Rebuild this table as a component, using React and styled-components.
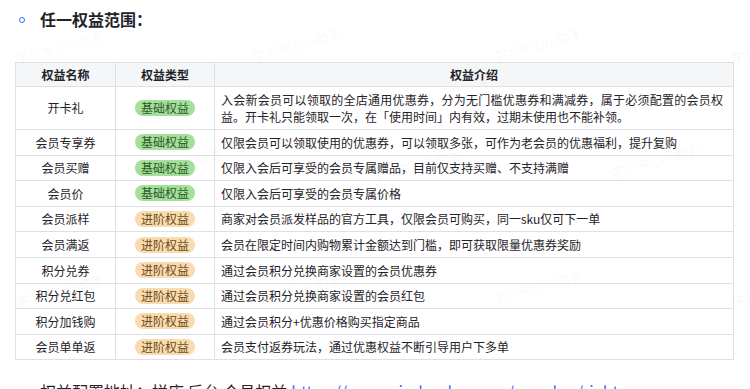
import React from "react";
import styled, { createGlobalStyle } from "styled-components";

const Global = createGlobalStyle`
  html, body { margin: 0; padding: 0; background: #fff; }
  body { font-family: "Noto Sans CJK SC", "Noto Sans", sans-serif; color: #1f2329; }
`;

const Page = styled.div`
  position: relative;
  width: 750px;
  height: 389px;
  overflow: hidden;
  padding-top: 7px;
  box-sizing: border-box;
`;

const Heading = styled.div`
  display: flex;
  align-items: center;
  padding-left: 19px;
  height: 24px;
  font-size: 16px;
  font-weight: 700;
  line-height: 24px;
  color: #1f2329;
`;

const Bullet = styled.span`
  width: 4px;
  height: 4px;
  border: 1px solid #3370ff;
  border-radius: 50%;
  margin-right: 15px;
  margin-top: 2px;
`;

const Table = styled.table`
  margin: 31px 0 0 15px;
  width: 718px;
  border-collapse: collapse;
  table-layout: fixed;
  font-size: 12px;
  border: 1px solid #dee0e3;
`;

const Col = styled.col`
  width: ${(p) => p.$w}px;
`;

const Th = styled.th`
  background: #f5f6f7;
  border: 1px solid #dee0e3;
  font-weight: 700;
  height: 24px;
  box-sizing: border-box;
  line-height: 17px;
  padding: 0 6px;
  text-align: center;
  color: #1f2329;
`;

const Td = styled.td`
  border: 1px solid #dee0e3;
  line-height: 17.4px;
  height: 25.6px;
  box-sizing: border-box;
  padding: 3.6px ${(p) => (p.$desc ? "10px 3.6px 6px" : "6px")};
  text-align: ${(p) => (p.$desc ? "justify" : "center")};
  vertical-align: middle;
  color: #1f2329;
`;

const Badge = styled.span`
  display: block;
  width: fit-content;
  margin: 0 auto;
  height: 16px;
  line-height: 16px;
  padding: 0 6px;
  border-radius: 8px;
  font-size: 12px;
  background: ${(p) => (p.$adv ? "#f8dbb0" : "#a4e09b")};
  color: ${(p) => (p.$adv ? "#6e4a16" : "#2c5a26")};
`;

const Footer = styled.div`
  margin-top: 19px;
  padding-left: 40px;
  font-size: 16px;
  line-height: 24px;
  white-space: nowrap;
  color: #1f2329;
`;

const Link = styled.span`
  color: #3370ff;
  margin-left: 4px;
`;

const Watermark = styled.span`
  position: absolute;
  left: ${(p) => p.$x}px;
  top: ${(p) => p.$y}px;
  transform: translate(-50%, -50%) rotate(-15deg);
  font-size: 13px;
  color: rgba(0, 0, 0, 0.045);
  pointer-events: none;
  white-space: nowrap;
`;

const rows = [
  ["开卡礼", false, "入会新会员可以领取的全店通用优惠券，分为无门槛优惠券和满减券，属于必须配置的会员权益。开卡礼只能领取一次，在「使用时间」内有效，过期未使用也不能补领。"],
  ["会员专享券", false, "仅限会员可以领取使用的优惠券，可以领取多张，可作为老会员的优惠福利，提升复购"],
  ["会员买赠", false, "仅限入会后可享受的会员专属赠品，目前仅支持买赠、不支持满赠"],
  ["会员价", false, "仅限入会后可享受的会员专属价格"],
  ["会员派样", true, "商家对会员派发样品的官方工具，仅限会员可购买，同一sku仅可下一单"],
  ["会员满返", true, "会员在限定时间内购物累计金额达到门槛，即可获取限量优惠券奖励"],
  ["积分兑券", true, "通过会员积分兑换商家设置的会员优惠券"],
  ["积分兑红包", true, "通过会员积分兑换商家设置的会员红包"],
  ["积分加钱购", true, "通过会员积分+优惠价格购买指定商品"],
  ["会员单单返", true, "会员支付返券玩法，通过优惠权益不断引导用户下多单"],
];

const marks = [
  [60, 47], [297, 45], [538, 44], [776, 47],
  [178, 163], [416, 165], [655, 161],
  [60, 290], [297, 288], [538, 286], [776, 290],
];

export default function App() {
  return (
    <>
      <Global />
      <Page>
        <Heading>
          <Bullet />
          任一权益范围：
        </Heading>
        <Table>
          <colgroup>
            <Col $w={100} />
            <Col $w={99} />
            <Col $w={519} />
          </colgroup>
          <thead>
            <tr>
              <Th>权益名称</Th>
              <Th>权益类型</Th>
              <Th>权益介绍</Th>
            </tr>
          </thead>
          <tbody>
            {rows.map(([name, adv, desc]) => (
              <tr key={name}>
                <Td>{name}</Td>
                <Td>
                  <Badge $adv={adv}>{adv ? "进阶权益" : "基础权益"}</Badge>
                </Td>
                <Td $desc>{desc}</Td>
              </tr>
            ))}
          </tbody>
        </Table>
        <Footer>
          权益配置地址：拼店 后台 会员权益
          <Link>https://mms.pinduoduo.com/member/rights</Link>
        </Footer>
        {marks.map(([x, y], i) => (
          <Watermark key={i} $x={x} $y={y}>
            学习中心小助手
          </Watermark>
        ))}
      </Page>
    </>
  );
}
